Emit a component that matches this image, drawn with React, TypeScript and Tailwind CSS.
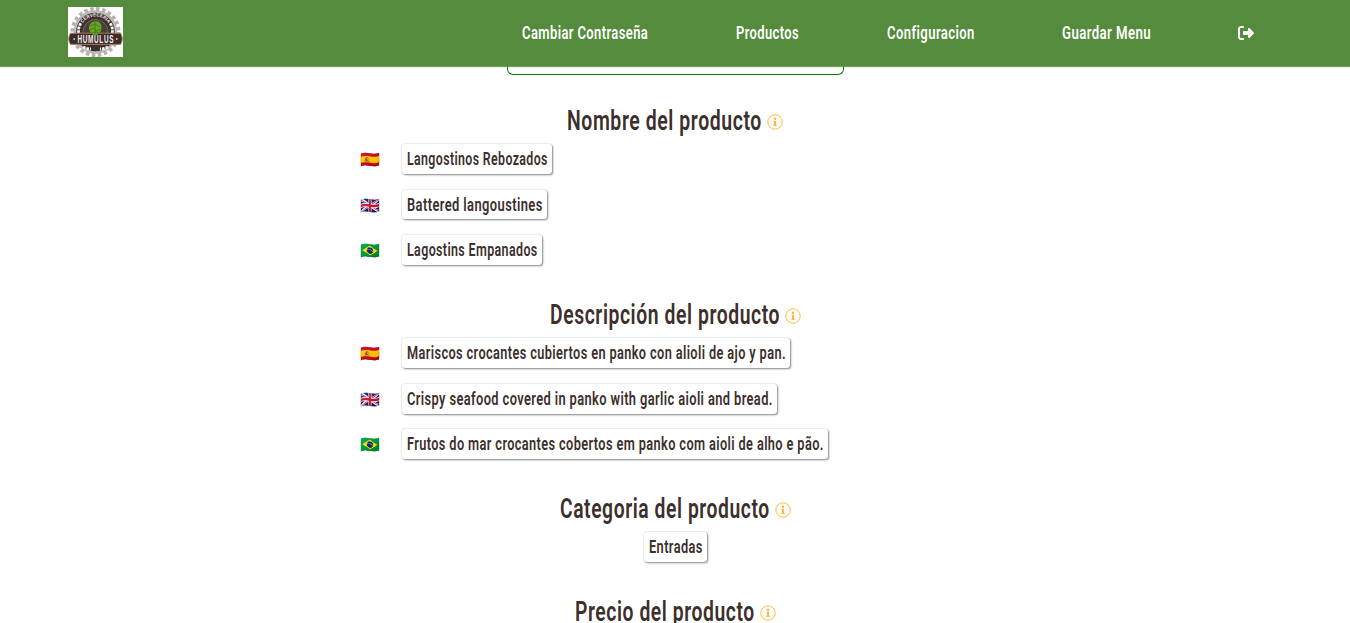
import { useLayoutEffect, useRef, useState } from 'react';
import { FaRightFromBracket } from 'react-icons/fa6';

/* Condensed lettering: the label is squeezed horizontally to fill its box. */
function Condensed({ text, className }: { text: string; className: string }) {
  const ref = useRef<HTMLSpanElement>(null);
  const [scale, setScale] = useState(0.75);
  useLayoutEffect(() => {
    const el = ref.current;
    if (el && el.parentElement) {
      setScale(el.parentElement.getBoundingClientRect().width / el.offsetWidth);
    }
  }, [text]);
  return (
    <span className={`block shrink-0 ${className}`}>
      <span ref={ref} className="inline-block origin-left tracking-[0.03em] whitespace-nowrap" style={{ transform: `scaleX(${scale})` }}>
        {text}
      </span>
    </span>
  );
}

function Logo() {
  return (
    <svg viewBox="0 0 55 50" className="h-[50px] w-[55px] bg-white" aria-label="Humulus">
      <circle cx="27.5" cy="25" r="23" fill="none" stroke="#b3b0af" strokeWidth="4" strokeDasharray="3.4 2.62" />
      <circle cx="27.5" cy="25" r="21.8" fill="#bab7b6" />
      <circle cx="27.5" cy="25" r="19.8" fill="#3d302d" stroke="#e2dcd9" strokeWidth="0.7" />
      <circle cx="27.5" cy="25" r="12.5" fill="#49403b" stroke="#978d88" strokeWidth="0.5" />
      <path id="logo-arc" d="M12.5 21 A15.5 15.5 0 0 1 42.5 21" fill="none" />
      <text fill="#f2edea" fontFamily="Liberation Sans" fontWeight="700" fontSize="4.6">
        <textPath href="#logo-arc" startOffset="50%" textAnchor="middle">CERVECERIA</textPath>
      </text>
      <g fill="none" stroke="#f5f2ee" strokeWidth="2.8" strokeDasharray="2.8 0.9">
        <path d="M10.8 26 Q9.6 21 13 16" />
        <path d="M44.2 26 Q45.4 21 42 16" />
        <path d="M15 39.8 Q18 42 23 42" />
        <path d="M40 39.8 Q37 42 32 42" />
      </g>
      <path d="M2.4 26.2 H52.6 Q56 31.8 52.6 37.4 H2.4 Q-1 31.8 2.4 26.2Z" fill="#392c2a" stroke="#b57d61" strokeWidth="0.9" />
      <path d="M27 14.3 Q31 14 33 17.5 Q34.3 22 32 25.5 L28.5 28 H26 L23 26 Q19.8 21.5 21.8 17.5 Q23.5 14.5 27 14.3Z" fill="#66a51f" />
      <path d="M22 19 L27 17 L32 20 M21.5 23 L26 21 L28 24 L33 22 M24 26 L28 25 L31 26 M27 15 V28" fill="none" stroke="#3f7a1b" strokeWidth="0.8" />
      <text transform="translate(9.4 35.6) scale(0.64 1)" fill="#f5f2ef" fontFamily="Liberation Sans" fontWeight="700" fontSize="10" letterSpacing="1.1">HUMULUS</text>
      <circle cx="6.2" cy="32" r="0.9" fill="#e6c7b8" />
      <circle cx="48.8" cy="32" r="0.9" fill="#e6c7b8" />
    </svg>
  );
}

function InfoIcon() {
  return (
    <svg viewBox="0 0 16 16" className="mt-[2px] size-4 shrink-0" fill="none">
      <circle cx="8" cy="8" r="7.2" stroke="#ffb833" strokeWidth="0.95" />
      <circle cx="8" cy="4.7" r="1.2" fill="#ffb833" />
      <path d="M6.3 6.8H9.1V11.2H10V12H6.1V11.2H7V7.6H6.3Z" fill="#ffb833" />
    </svg>
  );
}

function Heading({ text, width }: { text: string; width: string }) {
  return (
    <h2 className="flex h-9 items-center justify-center gap-[5px] pl-[0.5px] text-[28px] leading-9 font-semibold">
      <Condensed text={text} className={width} />
      <InfoIcon />
    </h2>
  );
}

function Chip({ text, width }: { text: string; width: string }) {
  return (
    <div className="flex h-[29.6px] items-center rounded-[3px] px-[4.8px] pb-[0.7px] text-[18.3px] leading-[29px] font-semibold shadow-[1px_1px_2px_#888,0_0_2px_#ccc]">
      <Condensed text={text} className={width} />
    </div>
  );
}

type Row = { flag: string; text: string; width: string };

function Translations({ rows }: { rows: Row[] }) {
  return (
    <div className="mt-[5.3px] flex w-full flex-col gap-[15.9px] pl-[360px]">
      {rows.map((r) => (
        <div key={r.text} className="flex h-[29.6px] items-center">
          <span className="w-[41.9px] pt-[2px] font-['Noto_Color_Emoji',sans-serif] text-base leading-6">{r.flag}</span>
          <Chip text={r.text} width={r.width} />
        </div>
      ))}
    </div>
  );
}

const names: Row[] = [
  { flag: '🇪🇸', text: 'Langostinos Rebozados', width: 'w-[140.8px]' },
  { flag: '🇬🇧', text: 'Battered langoustines', width: 'w-[136px]' },
  { flag: '🇧🇷', text: 'Lagostins Empanados', width: 'w-[130.8px]' },
];

const descriptions: Row[] = [
  { flag: '🇪🇸', text: 'Mariscos crocantes cubiertos en panko con alioli de ajo y pan.', width: 'w-[379px]' },
  { flag: '🇬🇧', text: 'Crispy seafood covered in panko with garlic aioli and bread.', width: 'w-[366px]' },
  { flag: '🇧🇷', text: 'Frutos do mar crocantes cobertos em panko com aioli de alho e pão.', width: 'w-[417px]' },
];

export default function App() {
  return (
    <div className="flex h-[623px] w-full flex-col overflow-hidden bg-white font-[Roboto,sans-serif] text-[#3c2f2c]">
      <header className="z-10 flex h-[66px] shrink-0 items-center justify-between bg-[#558b3c] pr-24 pl-[68px] shadow-[0_1px_1px_#558b3ccc]">
        <div className="-mt-[2px]"><Logo /></div>
        <nav className="flex items-center gap-[87.5px] text-[18.3px] leading-6 font-semibold text-white">
          <Condensed text="Cambiar Contraseña" className="w-[126.5px]" />
          <Condensed text="Productos" className="w-[63px]" />
          <Condensed text="Configuracion" className="w-[87.5px]" />
          <Condensed text="Guardar Menu" className="w-[89px]" />
          <FaRightFromBracket className="size-4" />
        </nav>
      </header>
      <main className="flex flex-col items-center">
        <div className="h-[9px] w-[337px] shrink-0 rounded-b-[6px] border border-t-0 border-[#008000]" />
        <section className="mt-[28px] w-full">
          <Heading text="Nombre del producto" width="w-[195px]" />
          <Translations rows={names} />
        </section>
        <section className="mt-[32.3px] w-full">
          <Heading text="Descripción del producto" width="w-[230px]" />
          <Translations rows={descriptions} />
        </section>
        <section className="mt-[32.3px] flex w-full flex-col items-center">
          <Heading text="Categoria del producto" width="w-[210px]" />
          <div className="mt-[5px] pl-px"><Chip text="Entradas" width="w-[54px]" /></div>
        </section>
        <section className="mt-[32.2px] w-full">
          <Heading text="Precio del producto" width="w-[180px]" />
        </section>
      </main>
    </div>
  );
}
